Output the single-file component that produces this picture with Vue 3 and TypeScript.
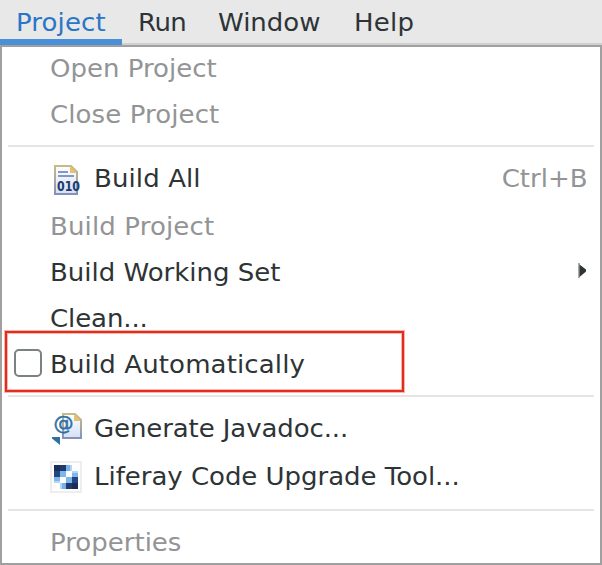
<script setup lang="ts">
interface Menu {
  label: string
  width: number
  tracking?: number
}

interface MenuEntry {
  label: string
  tracking?: number
  icon?: 'build' | 'javadoc' | 'liferay'
  shortcut?: string
  disabled?: boolean
  submenu?: boolean
  checkbox?: boolean
}

const menus: Menu[] = [
  { label: 'Project', width: 122, tracking: 0.1 },
  { label: 'Run', width: 80, tracking: -0.5 },
  { label: 'Window', width: 136 },
  { label: 'Help', width: 92, tracking: 0.2 },
]

const groups: MenuEntry[][] = [
  [
    { label: 'Open Project', disabled: true },
    { label: 'Close Project', tracking: 0.1, disabled: true },
  ],
  [
    { label: 'Build All', tracking: 0.1, icon: 'build', shortcut: 'Ctrl+B' },
    { label: 'Build Project', tracking: 0.13, disabled: true },
    { label: 'Build Working Set', submenu: true },
    { label: 'Clean...', tracking: -0.1 },
    { label: 'Build Automatically', tracking: 0.12, checkbox: true },
  ],
  [
    { label: 'Generate Javadoc...', tracking: -0.1, icon: 'javadoc' },
    { label: 'Liferay Code Upgrade Tool...', tracking: -0.03, icon: 'liferay' },
  ],
  [{ label: 'Properties', disabled: true }],
]

// Upper-left half of the logo (column, row, colour); the other half is its point reflection
const tiles: [number, number, string][] = [
  [0, 0, '#182d59'],
  [1, 0, '#213a69'],
  [2, 0, '#78b1ea'],
  [0, 1, '#244482'],
  [1, 1, '#7db7ef'],
  [0, 2, '#7fb7ec'],
]
</script>

<template>
  <div class="window">
    <nav class="menubar">
      <span
        v-for="(menu, i) in menus"
        :key="menu.label"
        class="tab"
        :class="{ active: i === 0 }"
        :style="{ width: menu.width + 'px', letterSpacing: (menu.tracking ?? 0) + 'px' }"
      >
        <span class="label">{{ menu.label }}</span>
      </span>
    </nav>
    <div class="menu">
      <div v-for="(group, g) in groups" :key="g" class="group">
        <div
          v-for="item in group"
          :key="item.label"
          class="item"
          :class="{ disabled: item.disabled, 'with-icon': item.icon }"
        >
          <span v-if="item.checkbox" class="highlight"></span>
          <span v-if="item.checkbox" class="checkbox"></span>
          <svg v-if="item.icon === 'build'" class="icon" viewBox="0 0 32 32">
            <defs>
              <linearGradient id="page" x1="0" y1="0" x2="0" y2="1">
                <stop offset="0" stop-color="#ffffff" />
                <stop offset="1" stop-color="#d5e0f5" />
              </linearGradient>
              <linearGradient id="edge" x1="0" y1="0" x2="0" y2="1">
                <stop offset="0" stop-color="#c9b985" />
                <stop offset="0.5" stop-color="#aaa9a2" />
                <stop offset="1" stop-color="#8392b8" />
              </linearGradient>
            </defs>
            <path d="M5 3H21L27 9V31H5Z" fill="url(#page)" stroke="url(#edge)" stroke-width="2" />
            <path d="M20 4h2v2h2v2h2v2h-6Z" fill="#e5c16d" />
            <path d="M8 8h10v2H8ZM8 12h16v2H8Z" fill="#8497c9" />
            <text class="bits" x="7" y="28" textLength="23" lengthAdjust="spacingAndGlyphs">010</text>
          </svg>
          <svg v-else-if="item.icon === 'javadoc'" class="icon" viewBox="0 0 32 32">
            <path d="M13 1H25L31 7V25H13Z" fill="url(#page)" stroke="url(#edge)" stroke-width="2" />
            <path d="M24 2h2v2h2v2h2v2h-6Z" fill="#e5c16d" />
            <text class="at" x="3.5" y="16.5" textLength="20" lengthAdjust="spacingAndGlyphs">@</text>
            <path d="M2 24h8v8L2 25.5Z" fill="#2e70a6" />
          </svg>
          <svg v-else-if="item.icon === 'liferay'" class="icon" viewBox="0 0 32 32" shape-rendering="crispEdges">
            <path d="M1 1H31V31H1Z" fill="#fff" stroke="#eeeeee" stroke-width="2" />
            <g v-for="([x, y, color], t) in tiles" :key="t" :fill="color">
              <rect :x="4 + x * 6" :y="4 + y * 6" width="6" height="6" />
              <rect :x="22 - x * 6" :y="22 - y * 6" width="6" height="6" />
            </g>
            <path d="M20 4h2v6h-2ZM10 22h2v6h-2ZM4 20h6v2H4ZM22 10h6v2h-6Z" fill="#b4d5f5" />
          </svg>
          <span class="label" :style="{ letterSpacing: (item.tracking ?? 0) + 'px' }">{{ item.label }}</span>
          <span v-if="item.shortcut" class="shortcut">{{ item.shortcut }}</span>
          <svg v-if="item.submenu" class="arrow" viewBox="0 0 8 16">
            <path d="M0 0h2v15H0Z" fill="#a9acad" />
            <path d="M1.5 1.5L8 6.5v2L1.5 14Z" fill="#2e3436" />
          </svg>
        </div>
      </div>
    </div>
  </div>
</template>

<style>
body {
  margin: 0;
  background: #fff;
}
</style>

<style scoped>
.window {
  width: 602px;
  height: 565px;
  display: flex;
  flex-direction: column;
  overflow: hidden;
  color: #2e3436;
  font: 25px/30px "DejaVu Sans", sans-serif;
  white-space: nowrap;
}
.menubar {
  box-sizing: border-box;
  height: 45px;
  display: flex;
  background: linear-gradient(#d0d0d0, #d0d0d0) bottom / 100% 2px no-repeat #e8e8e8;
}
.tab {
  box-sizing: border-box;
  height: 45px;
  padding: 8px 0 0 16px;
}
.tab.active {
  color: #2a76c6;
  border-bottom: 6px solid #4a90d9;
}
.label,
.shortcut {
  display: inline-block;
  transform: scaleX(1.04);
  transform-origin: left;
}
.menu {
  box-sizing: border-box;
  height: 520px;
  background: #fff;
  box-shadow: inset 0 0 0 2px #a0a0a0;
}
.group + .group::before {
  content: "";
  display: block;
  height: 2px;
  margin: 8px;
  background: #e5e5e5;
}
.item {
  box-sizing: border-box;
  position: relative;
  height: 46px;
  display: flex;
  align-items: center;
  padding: 2px 14px 0 50px;
}
.with-icon {
  height: 48px;
  padding-top: 0;
}
.disabled,
.shortcut {
  color: #929496;
}
.icon {
  width: 32px;
  height: 32px;
  margin-right: 12px;
  overflow: visible;
}
.bits {
  font: bold 13.5px "DejaVu Sans", sans-serif;
  fill: #203b6c;
}
.at {
  font: 19px "DejaVu Sans", sans-serif;
  fill: #2e70a6;
  stroke: #2e70a6;
  stroke-width: 0.5;
}
.shortcut {
  margin-left: auto;
  transform-origin: right;
}
.arrow {
  width: 8px;
  height: 16px;
  margin: 0 2px 4px auto;
}
.checkbox {
  position: absolute;
  box-sizing: border-box;
  left: 14px;
  top: 8px;
  width: 28px;
  height: 28px;
  border: 2px solid #7b8080;
  border-radius: 5px;
}
.highlight {
  position: absolute;
  box-sizing: border-box;
  left: 5px;
  top: -10px;
  width: 399px;
  height: 61px;
  border: 2px solid #e12d1c;
  box-shadow: 0 0 0 1px rgba(225, 45, 28, 0.35), inset 0 0 0 1px rgba(225, 45, 28, 0.35);
}
</style>
